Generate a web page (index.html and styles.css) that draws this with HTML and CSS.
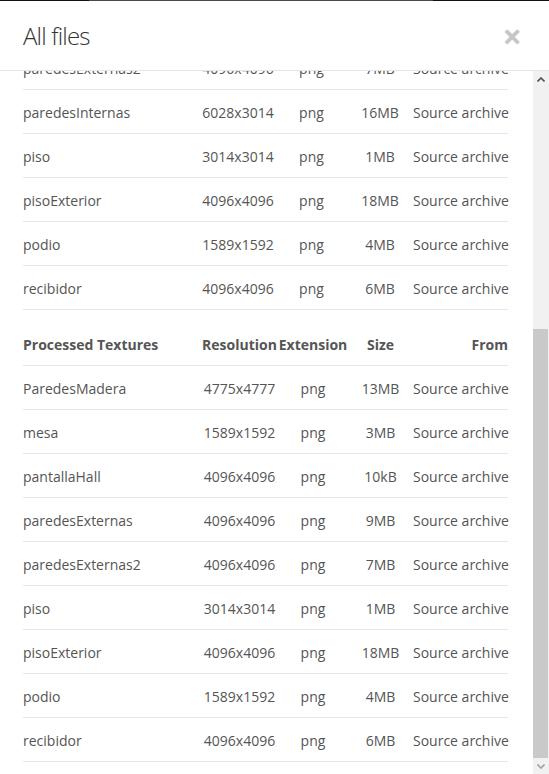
FILE: index.html
```html
<!DOCTYPE html>
<html>
<head>
<meta charset="utf-8">
<link rel="stylesheet" href="styles.css">
</head>
<body>
<div class="backdrop-edge"><span class="edge-mid"></span></div>
<div class="modal">
  <div class="modal-header">
    <h4 class="modal-title">All files</h4>
    <button class="close" type="button">&times;</button>
  </div>
  <div class="modal-body">
    <div class="scroll-area" id="scroll">
      <table class="files t1">
        <colgroup><col class="c1"><col class="c2"><col class="c3"><col class="c4"><col class="c5"></colgroup>
        <thead><tr><th class="l">Source Textures</th><th>Resolution</th><th>Extension</th><th>Size</th><th class="r">From</th></tr></thead>
        <tbody>
          <tr><td class="l">alfombra</td><td>2048x2048</td><td>png</td><td>3MB</td><td class="r">Source archive</td></tr>
          <tr><td class="l">cuadro</td><td>1024x1024</td><td>png</td><td>1MB</td><td class="r">Source archive</td></tr>
          <tr><td class="l">lampara</td><td>2048x2048</td><td>png</td><td>2MB</td><td class="r">Source archive</td></tr>
          <tr><td class="l">ParedesMadera</td><td>4775x4777</td><td>png</td><td>13MB</td><td class="r">Source archive</td></tr>
          <tr><td class="l">mesa</td><td>1589x1592</td><td>png</td><td>3MB</td><td class="r">Source archive</td></tr>
          <tr><td class="l">pantallaHall</td><td>4096x4096</td><td>png</td><td>10kB</td><td class="r">Source archive</td></tr>
          <tr><td class="l">paredesExternas</td><td>4096x4096</td><td>png</td><td>9MB</td><td class="r">Source archive</td></tr>
          <tr><td class="l">paredesExternas2</td><td>4096x4096</td><td>png</td><td>7MB</td><td class="r">Source archive</td></tr>
          <tr><td class="l">paredesInternas</td><td>6028x3014</td><td>png</td><td>16MB</td><td class="r">Source archive</td></tr>
          <tr><td class="l">piso</td><td>3014x3014</td><td>png</td><td>1MB</td><td class="r">Source archive</td></tr>
          <tr><td class="l">pisoExterior</td><td>4096x4096</td><td>png</td><td>18MB</td><td class="r">Source archive</td></tr>
          <tr><td class="l">podio</td><td>1589x1592</td><td>png</td><td>4MB</td><td class="r">Source archive</td></tr>
          <tr><td class="l">recibidor</td><td>4096x4096</td><td>png</td><td>6MB</td><td class="r">Source archive</td></tr>
        </tbody>
      </table>
      <table class="files t2">
        <colgroup><col class="c1"><col class="c2"><col class="c3"><col class="c4"><col class="c5"></colgroup>
        <thead><tr><th class="l">Processed Textures</th><th>Resolution</th><th>Extension</th><th>Size</th><th class="r">From</th></tr></thead>
        <tbody>
          <tr><td class="l">ParedesMadera</td><td>4775x4777</td><td>png</td><td>13MB</td><td class="r">Source archive</td></tr>
          <tr><td class="l">mesa</td><td>1589x1592</td><td>png</td><td>3MB</td><td class="r">Source archive</td></tr>
          <tr><td class="l">pantallaHall</td><td>4096x4096</td><td>png</td><td>10kB</td><td class="r">Source archive</td></tr>
          <tr><td class="l">paredesExternas</td><td>4096x4096</td><td>png</td><td>9MB</td><td class="r">Source archive</td></tr>
          <tr><td class="l">paredesExternas2</td><td>4096x4096</td><td>png</td><td>7MB</td><td class="r">Source archive</td></tr>
          <tr><td class="l">piso</td><td>3014x3014</td><td>png</td><td>1MB</td><td class="r">Source archive</td></tr>
          <tr><td class="l">pisoExterior</td><td>4096x4096</td><td>png</td><td>18MB</td><td class="r">Source archive</td></tr>
          <tr><td class="l">podio</td><td>1589x1592</td><td>png</td><td>4MB</td><td class="r">Source archive</td></tr>
          <tr><td class="l">recibidor</td><td>4096x4096</td><td>png</td><td>6MB</td><td class="r">Source archive</td></tr>
        </tbody>
      </table>
    </div>
    <div class="scrollbar">
      <div class="sb-btn"><svg width="8" height="5" viewBox="0 0 8 5"><path d="M0.5 4.5 L4 1 L7.5 4.5" fill="none" stroke="#505050" stroke-width="1.6"/></svg></div>
      <div class="sb-track"><div class="sb-thumb"></div></div>
      <div class="sb-btn sb-down"><svg width="8" height="5" viewBox="0 0 8 5"><path d="M0.5 0.5 L4 4 L7.5 0.5" fill="none" stroke="#a3a3a3" stroke-width="1.6"/></svg></div>
    </div>
  </div>
</div>
<script src="script.js"></script>
</body>
</html>
```
FILE: styles.css
```css
* { box-sizing: border-box; }
html, body { margin: 0; padding: 0; height: 100%; }
body {
  background: #fff;
  font-family: "Open Sans", "Liberation Sans", sans-serif;
  font-size: 14px;
  color: #555;
  overflow: hidden;
}
.backdrop-edge {
  height: 1px;
  background: #111;
  display: flex;
}
.edge-mid {
  margin-left: 89px;
  width: 344px;
  background: #4a4a4a;
}
.modal {
  height: 773px;
  display: flex;
  flex-direction: column;
  background: #fff;
}
.modal-header {
  height: 70px;
  flex: none;
  border-bottom: 1px solid #e5e5e5;
  display: flex;
  align-items: center;
  justify-content: space-between;
  padding: 1px 27px 0 23px;
}
.modal-title {
  margin: 0;
  font-size: 24px;
  font-weight: 300;
  letter-spacing: -0.8px;
  color: #333;
  line-height: 1;
}
.close {
  border: 0;
  background: none;
  padding: 0;
  font-family: "Open Sans", "Liberation Sans", sans-serif;
  font-size: 34px;
  font-weight: 700;
  line-height: 1;
  color: #c6c6c6;
  cursor: pointer;
}
.modal-body {
  flex: 1;
  min-height: 0;
  display: flex;
}
.scroll-area {
  flex: 1;
  overflow: hidden;
  padding: 18px 0 12px 23px;
}
.scrollbar {
  width: 16px;
  flex: none;
  background: #f1f1f1;
  display: flex;
  flex-direction: column;
}
.sb-btn {
  height: 17px;
  flex: none;
  display: flex;
  align-items: center;
  justify-content: center;
  padding-right: 1px;
}
.sb-down { height: 16px; }
.sb-track {
  flex: 1;
  display: flex;
  flex-direction: column;
  justify-content: flex-end;
}
.sb-thumb {
  height: 429px;
  width: 15px;
  background: #c9c9c9;
}
.files {
  width: 485px;
  border-collapse: separate;
  border-spacing: 0;
  table-layout: fixed;
}
.t1 { margin-bottom: 12px; }
.t1 .c1 { width: 177px; }
.t1 .c2 { width: 76px; }
.t1 .c3 { width: 71px; }
.t1 .c4 { width: 66px; }
.t1 .c5 { width: 95px; }
.t2 .c1 { width: 178px; }
.t2 .c2 { width: 77px; }
.t2 .c3 { width: 70px; }
.t2 .c4 { width: 65px; }
.t2 .c5 { width: 95px; }
.files th, .files td {
  height: 44px;
  padding: 2px 0 0;
  line-height: 20px;
  text-align: center;
  white-space: nowrap;
  border-bottom: 1px solid #e6e6e6;
  vertical-align: middle;
}
.files th { font-weight: 700; }
.files .l { text-align: left; }
.files .r { text-align: right; }
```
FILE: script.js
```js
var s = document.getElementById('scroll');
s.scrollTop = s.scrollHeight;
```
